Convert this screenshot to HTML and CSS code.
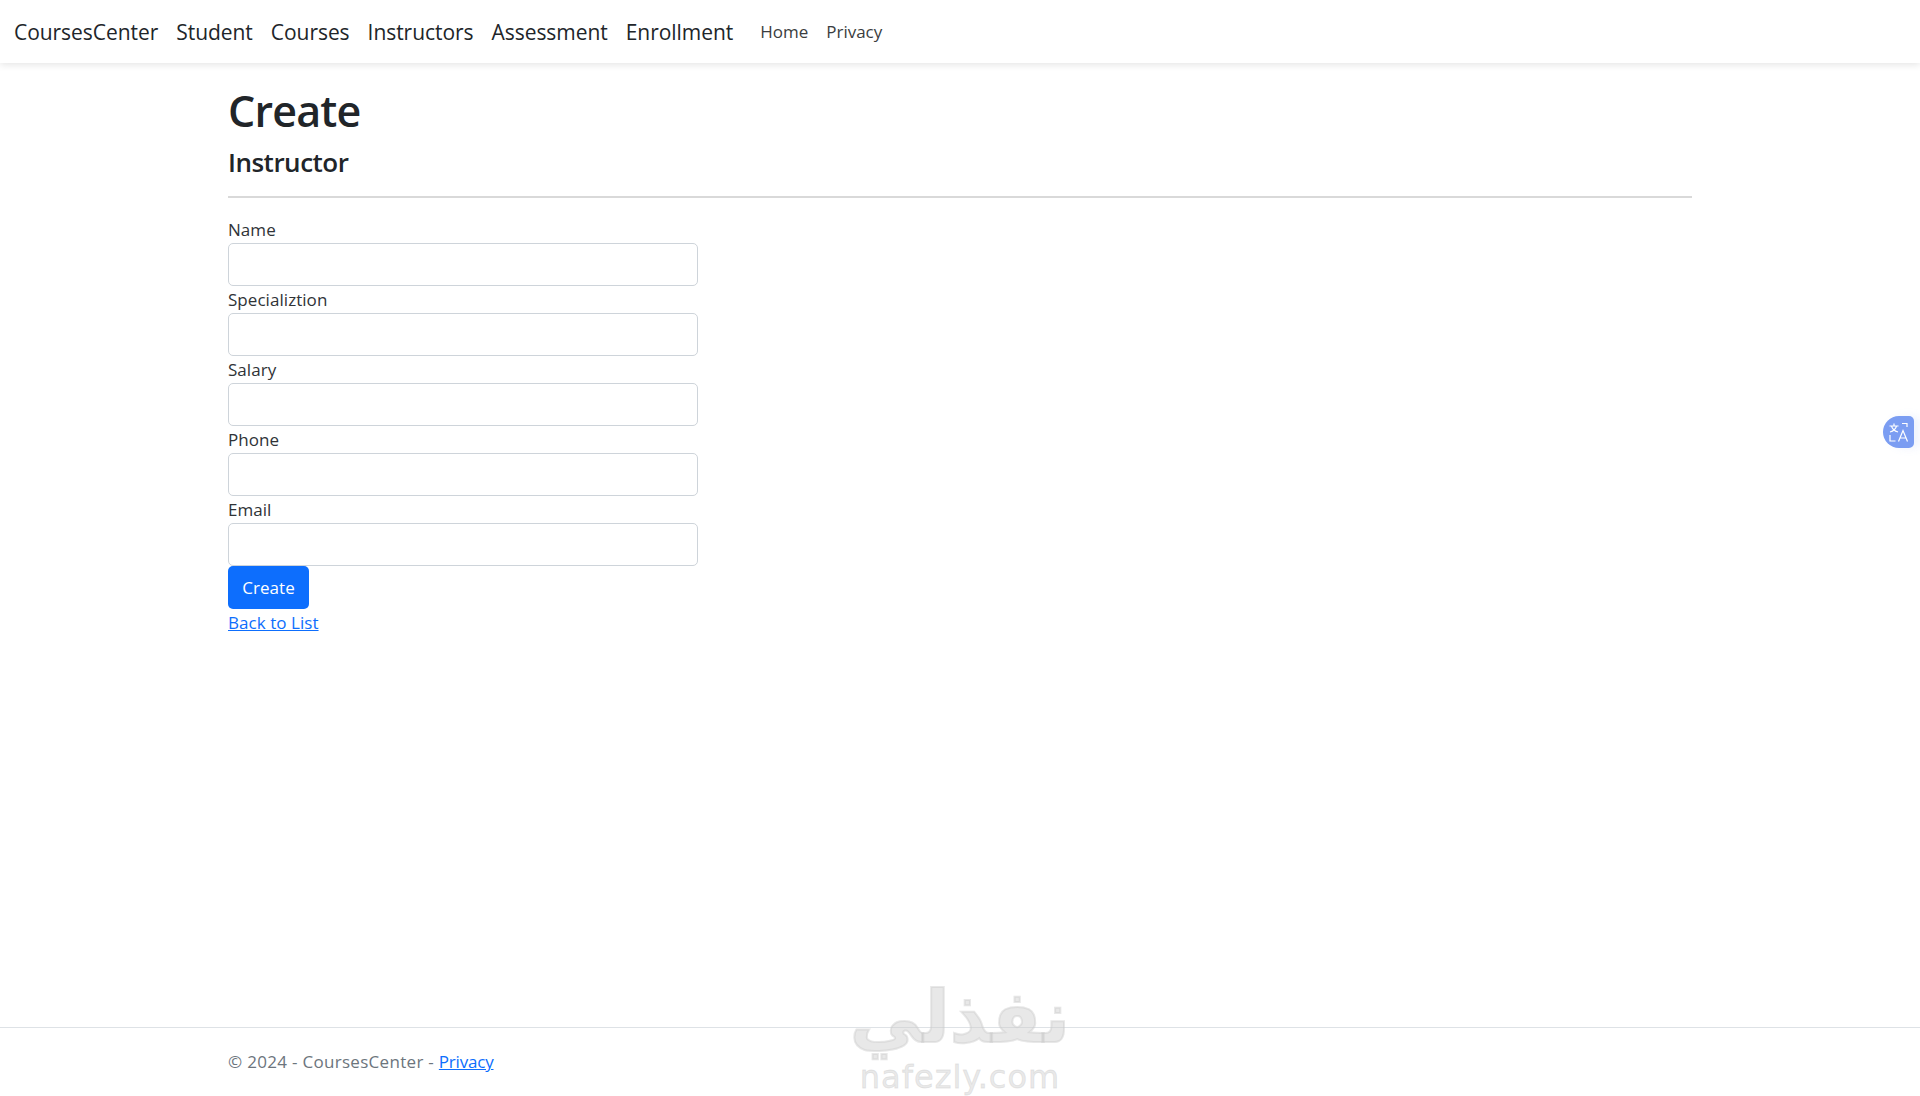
FILE: index.html
```html
<!DOCTYPE html>
<html lang="en">
<head>
<meta charset="utf-8">
<title>Create - CoursesCenter</title>
<link rel="stylesheet" href="styles.css">
</head>
<body>
<header class="navbar">
  <a class="brand" href="#">CoursesCenter</a>
  <a class="brand" href="#">Student</a>
  <a class="brand" href="#">Courses</a>
  <a class="brand" href="#">Instructors</a>
  <a class="brand" href="#">Assessment</a>
  <a class="brand" href="#">Enrollment</a>
  <nav class="links">
    <a class="nav-link" href="#">Home</a>
    <a class="nav-link" href="#">Privacy</a>
  </nav>
</header>
<main class="container">
  <h1 class="title">Create</h1>
  <h4 class="subtitle">Instructor</h4>
  <hr class="rule">
  <form class="form">
    <div class="group"><label class="label">Name</label><input class="control" type="text"></div>
    <div class="group"><label class="label">Specializtion</label><input class="control" type="text"></div>
    <div class="group"><label class="label">Salary</label><input class="control" type="text"></div>
    <div class="group"><label class="label">Phone</label><input class="control" type="text"></div>
    <div class="group"><label class="label">Email</label><input class="control" type="text"></div>
    <button class="btn" type="button">Create</button>
  </form>
  <div class="back"><a class="link" href="#">Back to List</a></div>
</main>
<footer class="footer">
  <div class="footer-inner">© 2024 - CoursesCenter - <a class="link footer-link" href="#">Privacy</a></div>
</footer>
<div class="translate">
  <svg class="translate-icon" viewBox="0 0 24 24" fill="none" stroke="#fff" stroke-width="1.2">
    <path d="M2.500 6h9M7 3.500v2.500M9.500 6c-.8 3-3 5-6.500 6M4.500 6c.8 3 3 5 6.500 6"/>
    <path d="M15 3.500h5v3.500M3 15v6h5.500"/>
    <path d="M11.500 21.500l4.500-11 4.500 11M13 18h6"/>
  </svg>
</div>
<div class="watermark" aria-hidden="true">
  <div class="wm-ar" lang="ar" dir="rtl">نفذلي</div>
  <div class="wm-en">nafezly.com</div>
</div>
</body>
</html>
```
FILE: styles.css
```css
* { box-sizing: border-box; }
html, body { margin: 0; padding: 0; height: 100%; }
body {
  font-family: "Open Sans", "Noto Sans", sans-serif;
  font-size: 17px;
  line-height: 27px;
  color: #212529;
  background: #fff;
  height: 1096px;
  overflow: hidden;
  position: relative;
}
a { text-decoration: none; color: inherit; }
.navbar {
  height: 63px;
  display: flex;
  align-items: center;
  padding: 2px 14px 0;
  gap: 18px;
  background: #fff;
  box-shadow: 0 2px 7px rgba(0,0,0,.1);
}
.brand { font-size: 21px; color: #212529; white-space: nowrap; letter-spacing: -.05px; }
.links { display: flex; gap: 18px; margin-left: 9px; margin-top: -2px; }
.nav-link { font-size: 17px; color: #3a3d40; letter-spacing: 0; }
.container { width: 1464px; margin: 0 auto; padding-top: 21px; }
.title { margin: 0; font-size: 43px; line-height: 54px; font-weight: 600; letter-spacing: -.8px; }
.subtitle { margin: 8px 0 0; font-size: 26px; line-height: 32px; font-weight: 600; letter-spacing: -.5px; }
.rule { margin: 18px 0 0; border: 0; height: 2px; background: #d9d9d9; }
.form { width: 470px; margin-top: 18px; display: flex; flex-direction: column; align-items: flex-start; }
.group { width: 100%; height: 70px; }
.label { display: block; height: 27px; letter-spacing: .05px; color: #2f3337; }
.control {
  display: block;
  width: 100%;
  height: 43px;
  border: 1px solid #ced4da;
  border-radius: 5px;
  background: #fff;
}
.btn {
  width: 81px;
  height: 43px;
  border: 0;
  border-radius: 5px;
  background: #0d6efd;
  color: #fff;
  font: inherit;
  letter-spacing: .05px;
  padding: 0;
}
.back { letter-spacing: .05px; }
.link { color: #0d6efd; text-decoration: underline; }
.footer {
  position: absolute;
  left: 0; right: 0; top: 1027px;
  height: 69px;
  border-top: 1px solid #dee2e6;
}
.footer-inner { width: 1464px; margin: 0 auto; padding-top: 20px; color: #6c757d; letter-spacing: .3px; }
.footer-link { letter-spacing: -.2px; }
.translate {
  position: absolute;
  right: 6px; top: 416px;
  width: 31px; height: 32px;
  background: #7b9df2;
  border-radius: 16px 5px 5px 16px;
  display: flex; align-items: center; justify-content: center;
  box-shadow: 6px 0 8px rgba(123,157,242,.12);
}
.translate-icon { width: 24px; height: 24px; }
.watermark {
  position: absolute;
  left: 830px; top: 977px;
  width: 260px;
  text-align: center;
  color: rgba(205,205,205,.45);
  pointer-events: none;
}
.wm-ar { font-family: "DejaVu Sans", sans-serif; font-weight: 700; font-size: 72px; line-height: 80px; -webkit-text-stroke: 2px rgba(205,205,205,.45); }
.wm-en { font-family: "DejaVu Sans", sans-serif; font-size: 32px; line-height: 36px; letter-spacing: 1px; margin-top: 2px; -webkit-text-stroke: .8px rgba(205,205,205,.45); }
```
